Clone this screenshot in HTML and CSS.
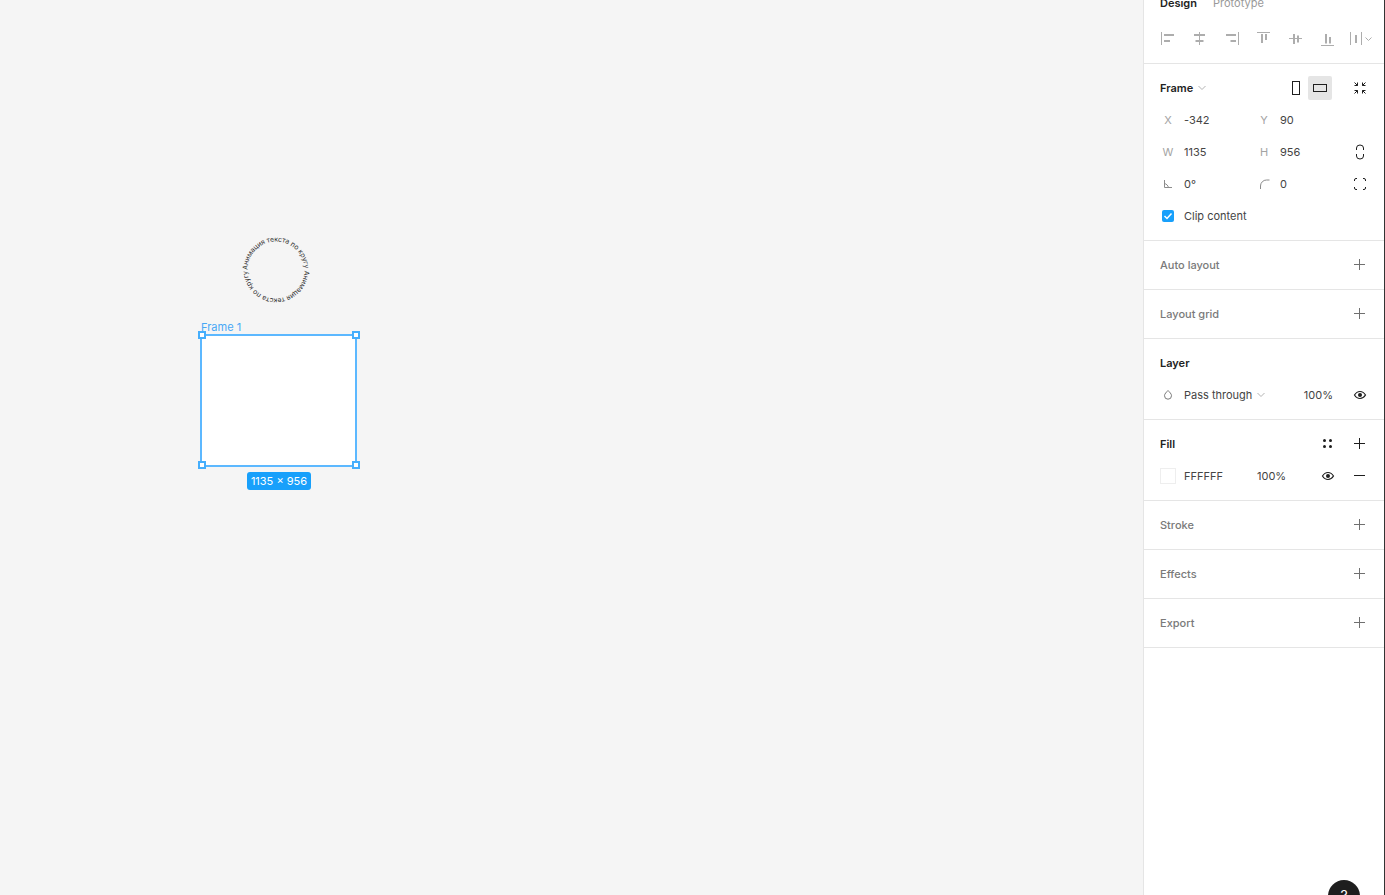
FILE: index.html
```html
<!DOCTYPE html>
<html lang="en">
<head>
    <meta charset="UTF-8">
    <meta name="viewport" content="width=device-width, initial-scale=1.0">
    <title>Frame 1</title>
    <link rel="stylesheet" href="styles.css">
</head>
<body>
    <main class="canvas">
        <svg class="circle-text" width="80" height="80" viewBox="0 0 80 80">
            <defs>
                <path id="ring" d="M11.5 40 a28.5 28.5 0 1 1 57 0 a28.5 28.5 0 1 1 -57 0"></path>
            </defs>
            <text class="circle-label">
                <textPath href="#ring" startOffset="0" textLength="178">Анимация текста по кругу Анимация текста по кругу</textPath>
            </text>
        </svg>

        <div class="frame-label">Frame 1</div>
        <div class="frame">
            <span class="handle top-left"></span>
            <span class="handle top-right"></span>
            <span class="handle bottom-left"></span>
            <span class="handle bottom-right"></span>
        </div>
        <div class="size-badge">1135 × 956</div>
    </main>

    <aside class="panel">
        <section class="section top-section">
            <div class="tabs">
                <span class="tab active">Design</span>
                <span class="tab">Prototype</span>
            </div>
            <div class="align-row">
                <svg class="align" viewBox="0 0 32 32"><path d="M9.500 10v13"/><path class="bar" d="M12 13h10M12 19h6"/></svg>
                <svg class="align" viewBox="0 0 32 32"><path d="M15.500 10v13"/><path class="bar" d="M10 13h11M11.500 19h8"/></svg>
                <svg class="align" viewBox="0 0 32 32"><path d="M22.500 10v13"/><path class="bar" d="M10 13h10M14.500 19h5.500"/></svg>
                <svg class="align" viewBox="0 0 32 32"><path d="M9 10.500h13"/><path class="bar" d="M14 12v9M18 12v6"/></svg>
                <svg class="align" viewBox="0 0 32 32"><path d="M9 16.500h13"/><path class="bar" d="M14 12v10M18 13.500v7"/></svg>
                <svg class="align" viewBox="0 0 32 32"><path d="M9 23.500h13"/><path class="bar" d="M14 12v9.500M18 15v6.500"/></svg>
                <svg class="align" viewBox="0 0 32 32"><path d="M6.500 10v13M17.500 10v13"/><path class="bar" d="M12 13v8"/><path d="M21.500 15.500l3 3 3-3"/></svg>
            </div>
        </section>

        <section class="section">
            <div class="row">
                <span class="title">Frame</span>
                <svg class="chevron" width="8" height="6" viewBox="0 0 8 6"><path d="M.5 1 4 4.500 7.500 1"/></svg>
                <div class="orientation">
                    <span class="orient-btn">
                        <svg class="dark-icon" width="24" height="24" viewBox="0 0 24 24"><rect x="8.500" y="5.500" width="7" height="13"/></svg>
                    </span>
                    <span class="orient-btn selected">
                        <svg class="dark-icon" width="24" height="24" viewBox="0 0 24 24"><rect x="5.500" y="8.500" width="13" height="7"/></svg>
                    </span>
                </div>
                <span class="icon-btn">
                    <svg class="dark-icon" width="32" height="32" viewBox="0 0 32 32"><path d="M10.500 10.500l3 3M13.500 10.500v3h-3M21.500 10.500l-3 3M18.500 10.500v3h3M10.500 21.500l3-3M13.500 21.500v-3h-3M21.500 21.500l-3-3M18.500 21.500v-3h3"/></svg>
                </span>
            </div>
            <div class="row">
                <div class="field"><span class="field-label">X</span><span class="value">-342</span></div>
                <div class="field"><span class="field-label">Y</span><span class="value">90</span></div>
            </div>
            <div class="row">
                <div class="field"><span class="field-label">W</span><span class="value">1135</span></div>
                <div class="field"><span class="field-label">H</span><span class="value">956</span></div>
                <span class="icon-btn">
                    <svg class="dark-icon" width="32" height="32" viewBox="0 0 32 32"><path d="M12.500 14v-2a3.500 3 0 0 1 7 0V14M12.500 18v2a3.500 3 0 0 0 7 0V18"/></svg>
                </span>
            </div>
            <div class="row">
                <div class="field">
                    <svg class="field-icon" width="16" height="16" viewBox="0 0 16 16"><path d="M4.500 4v7.500H12M4.500 7.500c2 .5 3.500 2 4 4"/></svg>
                    <span class="value">0°</span>
                </div>
                <div class="field">
                    <svg class="field-icon" width="16" height="16" viewBox="0 0 16 16"><path d="M4.500 13V10a6 6 0 0 1 6-6h3"/></svg>
                    <span class="value">0</span>
                </div>
                <span class="icon-btn">
                    <svg class="dark-icon" width="32" height="32" viewBox="0 0 32 32"><path d="M10.500 13v-1a1.500 1.500 0 0 1 1.500-1.500h1M19 10.500h1a1.500 1.500 0 0 1 1.500 1.500v1M21.500 19v1a1.500 1.500 0 0 1-1.500 1.500h-1M13 21.500h-1a1.500 1.500 0 0 1-1.500-1.500v-1"/></svg>
                </span>
            </div>
            <div class="row">
                <span class="checkbox">
                    <svg width="12" height="12" viewBox="0 0 12 12"><path d="M2.500 6l2.500 2.500 4.500-5"/></svg>
                </span>
                <span class="value">Clip content</span>
            </div>
        </section>

        <section class="section">
            <div class="row">
                <span class="title muted">Auto layout</span>
                <span class="icon-btn"><svg class="grey-icon" width="32" height="32" viewBox="0 0 32 32"><path d="M10 15.500h11M15.500 10v11"/></svg></span>
            </div>
        </section>

        <section class="section">
            <div class="row">
                <span class="title muted">Layout grid</span>
                <span class="icon-btn"><svg class="grey-icon" width="32" height="32" viewBox="0 0 32 32"><path d="M10 15.500h11M15.500 10v11"/></svg></span>
            </div>
        </section>

        <section class="section">
            <div class="row"><span class="title">Layer</span></div>
            <div class="row">
                <svg class="field-icon drop" width="16" height="16" viewBox="0 0 16 16"><path d="M8 3.500c1.500 1.700 3.500 3.200 3.500 5.200a3.500 3.500 0 0 1-7 0c0-2 2-3.500 3.500-5.200z"/></svg>
                <span class="value">Pass through</span>
                <svg class="chevron" width="8" height="6" viewBox="0 0 8 6"><path d="M.5 1 4 4.500 7.500 1"/></svg>
                <span class="value layer-opacity">100%</span>
                <span class="icon-btn eye-last">
                    <svg width="32" height="32" viewBox="0 0 32 32"><use href="#eye"/></svg>
                </span>
            </div>
        </section>

        <section class="section">
            <div class="row">
                <span class="title">Fill</span>
                <span class="icon-btn style-btn">
                    <svg width="32" height="32" viewBox="0 0 32 32" class="solid-icon"><circle cx="12.500" cy="12.500" r="1.500"/><circle cx="18.500" cy="12.500" r="1.500"/><circle cx="12.500" cy="18.500" r="1.500"/><circle cx="18.500" cy="18.500" r="1.500"/></svg>
                </span>
                <span class="icon-btn plus-fill"><svg class="dark-icon" width="32" height="32" viewBox="0 0 32 32"><path d="M10 15.500h11M15.500 10v11"/></svg></span>
            </div>
            <div class="row">
                <span class="swatch"></span>
                <span class="value hex">FFFFFF</span>
                <span class="value">100%</span>
                <span class="icon-btn style-btn">
                    <svg width="32" height="32" viewBox="0 0 32 32">
                        <defs>
                            <g id="eye">
                                <path class="eye-line" d="M10.500 16c1.400-2.300 3.200-3.500 5.500-3.500s4.100 1.200 5.500 3.500c-1.400 2.300-3.200 3.500-5.500 3.500s-4.100-1.200-5.500-3.500z"/>
                                <circle class="eye-ball" cx="16" cy="16" r="2"/>
                            </g>
                        </defs>
                        <use href="#eye"/>
                    </svg>
                </span>
                <span class="icon-btn plus-fill"><svg class="dark-icon" width="32" height="32" viewBox="0 0 32 32"><path d="M10 15.500h11"/></svg></span>
            </div>
        </section>

        <section class="section">
            <div class="row">
                <span class="title muted">Stroke</span>
                <span class="icon-btn"><svg class="grey-icon" width="32" height="32" viewBox="0 0 32 32"><path d="M10 15.500h11M15.500 10v11"/></svg></span>
            </div>
        </section>

        <section class="section">
            <div class="row">
                <span class="title muted">Effects</span>
                <span class="icon-btn"><svg class="grey-icon" width="32" height="32" viewBox="0 0 32 32"><path d="M10 15.500h11M15.500 10v11"/></svg></span>
            </div>
        </section>

        <section class="section">
            <div class="row">
                <span class="title muted">Export</span>
                <span class="icon-btn"><svg class="grey-icon" width="32" height="32" viewBox="0 0 32 32"><path d="M10 15.500h11M15.500 10v11"/></svg></span>
            </div>
        </section>

        <div class="help">?</div>
    </aside>
</body>
</html>
```

FILE: styles.css
```css
* {
    margin: 0;
    padding: 0;
    box-sizing: border-box;
}

html, body {
    height: 100%;
    overflow: hidden;
}

body {
    display: flex;
    font-family: Inter, 'Noto Sans', sans-serif;
    font-size: 11px;
    line-height: 16px;
    color: #444;
    background: #f5f5f5;
}

svg {
    display: block;
    fill: none;
    flex-shrink: 0;
}

/* canvas */
.canvas {
    flex: 1;
    position: relative;
    background: #f5f5f5;
}

.circle-text {
    position: absolute;
    left: 236px;
    top: 230px;
}

.circle-label {
    font-size: 7px;
    fill: #333;
}

.frame-label {
    position: absolute;
    left: 201px;
    top: 319px;
    color: #48a8f5;
}

.frame {
    position: absolute;
    left: 200px;
    top: 334px;
    width: 157px;
    height: 133px;
    background: #fff;
    border: 2px solid #5cb8ff;
}

.handle {
    position: absolute;
    width: 8px;
    height: 8px;
    background: #fff;
    border: 2px solid #45aefc;
}

.top-left { left: -4px; top: -5px; }
.top-right { right: -5px; top: -5px; }
.bottom-left { left: -4px; bottom: -4px; }
.bottom-right { right: -5px; bottom: -4px; }

.size-badge {
    position: absolute;
    left: 247px;
    top: 472px;
    width: 64px;
    height: 18px;
    line-height: 18px;
    text-align: center;
    border-radius: 3px;
    background: #18a0fb;
    color: #fff;
}

/* right panel */
.panel {
    position: relative;
    width: 242px;
    height: 100%;
    background: #fff;
    border-left: 1px solid #e5e5e5;
    border-right: 1px solid #333;
}

.section {
    padding: 8px 0;
    border-bottom: 1px solid #e5e5e5;
}

.top-section {
    display: flex;
    flex-direction: column;
    padding: 0;
    height: 64px;
}

.tabs {
    display: flex;
    gap: 16px;
    margin-top: -5px;
    padding-left: 16px;
    height: 27px;
    flex-shrink: 0;
}

.tab {
    color: #999;
    line-height: 16px;
}

.tab.active {
    color: #222;
    font-weight: 600;
}

.align-row {
    display: flex;
    padding-left: 8px;
}

.align {
    width: 32px;
    height: 32px;
    stroke: #adadad;
}

.align .bar {
    stroke-width: 2;
}

.row {
    display: flex;
    align-items: center;
    height: 32px;
    padding-left: 16px;
}

.title {
    font-weight: 600;
    color: #222;
}

.title.muted {
    font-weight: 500;
    color: #7a7a7a;
}

.chevron {
    margin-left: 5px;
    stroke: #b3b3b3;
}

.orientation {
    display: flex;
    margin-left: auto;
}

.orient-btn {
    width: 24px;
    height: 24px;
    border-radius: 2px;
}

.orient-btn.selected {
    background: #e5e5e5;
}

.orientation + .icon-btn {
    margin-left: 12px;
}

.icon-btn {
    width: 32px;
    height: 32px;
    margin-left: auto;
    margin-right: 8px;
}

.dark-icon {
    stroke: #1e1e1e;
}

.grey-icon {
    stroke: #707070;
}

.solid-icon {
    fill: #1e1e1e;
}

.eye-line {
    stroke: #1e1e1e;
    stroke-width: 1.2;
}

.eye-ball {
    fill: #1e1e1e;
}

.field {
    display: flex;
    align-items: center;
    flex-shrink: 0;
    width: 96px;
}

.field + .field {
    width: 88px;
}

.field-label {
    width: 16px;
    margin-right: 8px;
    text-align: center;
    color: #a3a3a3;
}

.field-icon {
    margin-right: 8px;
    stroke: #8c8c8c;
}

.drop {
    stroke: #7a7a7a;
}

.checkbox {
    width: 12px;
    height: 12px;
    margin: 0 10px 0 2px;
    border-radius: 2px;
    background: #18a0fb;
}

.checkbox svg {
    stroke: #fff;
    stroke-width: 1.5;
}

.layer-opacity {
    margin-left: auto;
    margin-right: 11px;
}

.eye-last {
    margin-left: 0;
}

.swatch {
    width: 16px;
    height: 16px;
    margin-right: 8px;
    background: #fff;
    border: 1px solid #eee;
}

.hex {
    width: 73px;
}

.style-btn {
    margin-right: 0;
}

.plus-fill {
    margin-left: 0;
}

.help {
    position: absolute;
    left: 184px;
    top: 880px;
    width: 32px;
    height: 32px;
    border-radius: 50%;
    background: #1e1e1e;
    color: #fff;
    font-size: 14px;
    line-height: 32px;
    text-align: center;
}
```
